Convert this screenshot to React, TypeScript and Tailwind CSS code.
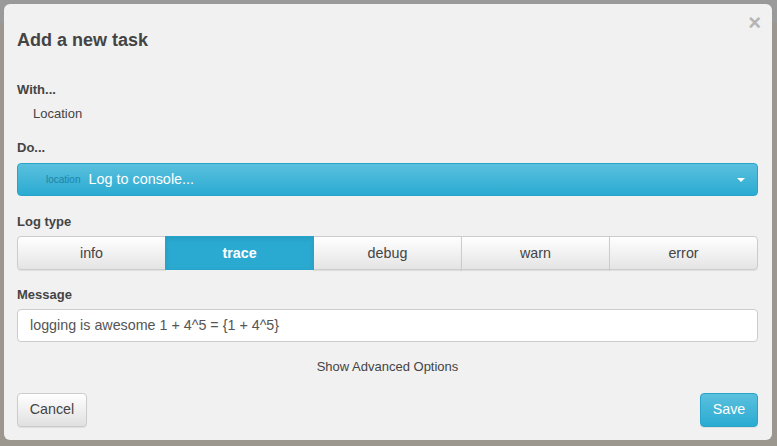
const logTypes = ["info", "trace", "debug", "warn", "error"];

function Label({ children, className = "" }: { children: React.ReactNode; className?: string }) {
  return <div className={`text-[13px] font-bold leading-[20px] text-[#444] ${className}`}>{children}</div>;
}

export default function App() {
  const active = "trace";
  return (
    <div
      className="w-[777px] h-[446px] overflow-hidden pl-[4px] pt-[4px] bg-[linear-gradient(to_bottom,#9a9a9a_0,#9a9a9a_23px,#9b978f_23px)]"
      style={{ fontFamily: '"Liberation Sans", Arial, sans-serif' }}
    >
      <div className="relative w-[768px] h-[436px] rounded-[6px] bg-[#f1f1f1] pl-[13px] pr-[14px] pt-[26px]">
        <button className="absolute right-[11px] top-[6px] text-[22px] font-bold leading-[26px] text-[#b5b5b5]">
          ×
        </button>
        <h3 className="text-[18px] font-bold leading-[20px] text-[#444]">Add a new task</h3>

        <Label className="mt-[30px]">With...</Label>
        <div className="mt-[4px] pl-[16px] text-[13px] leading-[20px] text-[#444]">Location</div>

        <Label className="mt-[14px]">Do...</Label>
        <div className="mt-[5px] flex h-[33px] items-center rounded-[4px] border border-[#28a4c9] bg-[linear-gradient(to_bottom,#5bc0de,#2aabd2)] pl-[28px] pr-[12px]">
          <span className="text-[10px] leading-none text-[#1d83a6]">location</span>
          <span className="ml-[8px] text-[14.4px] leading-none text-white">Log to console...</span>
          <span className="ml-auto h-0 w-0 border-x-[4px] border-t-[4px] border-x-transparent border-t-white" />
        </div>

        <Label className="mt-[16px]">Log type</Label>
        <div className="mt-[4px] flex h-[34px]">
          {logTypes.map((t, i) => (
            <button
              key={t}
              className={`flex-1 text-[14.3px] leading-none ${i > 0 ? "-ml-px" : ""} ${
                i === 0 ? "rounded-l-[4px]" : ""
              } ${i === logTypes.length - 1 ? "rounded-r-[4px]" : ""} ${
                t === active
                  ? "relative z-10 border border-[#28a4c9] bg-[#2aa9d1] font-bold text-white shadow-[inset_0_2px_4px_rgba(0,0,0,0.08)]"
                  : "border border-[#ccc] bg-[linear-gradient(to_bottom,#fff,#e4e4e4)] text-[#444] shadow-[0_1px_1px_rgba(0,0,0,0.075)]"
              }`}
            >
              {t}
            </button>
          ))}
        </div>

        <Label className="mt-[15px]">Message</Label>
        <div className="mt-[4px] flex h-[33px] items-center rounded-[4px] border border-[#ccc] bg-white px-[12px] text-[14.3px] text-[#555]">
          logging is awesome 1 + 4^5 = {"{1 + 4^5}"}
        </div>

        <div className="mt-[15px] text-center text-[13px] leading-[20px] text-[#444]">Show Advanced Options</div>

        <div className="mt-[16px] flex justify-between">
          <button className="h-[34px] w-[70px] rounded-[4px] border border-[#ccc] bg-[linear-gradient(to_bottom,#fff,#e0e0e0)] text-[14.3px] text-[#444] shadow-[0_1px_1px_rgba(0,0,0,0.075)]">
            Cancel
          </button>
          <button className="h-[34px] w-[58px] rounded-[4px] border border-[#28a4c9] bg-[linear-gradient(to_bottom,#5bc0de,#2aabd2)] text-[14.3px] text-white shadow-[0_1px_1px_rgba(0,0,0,0.075)]">
            Save
          </button>
        </div>
      </div>
    </div>
  );
}
